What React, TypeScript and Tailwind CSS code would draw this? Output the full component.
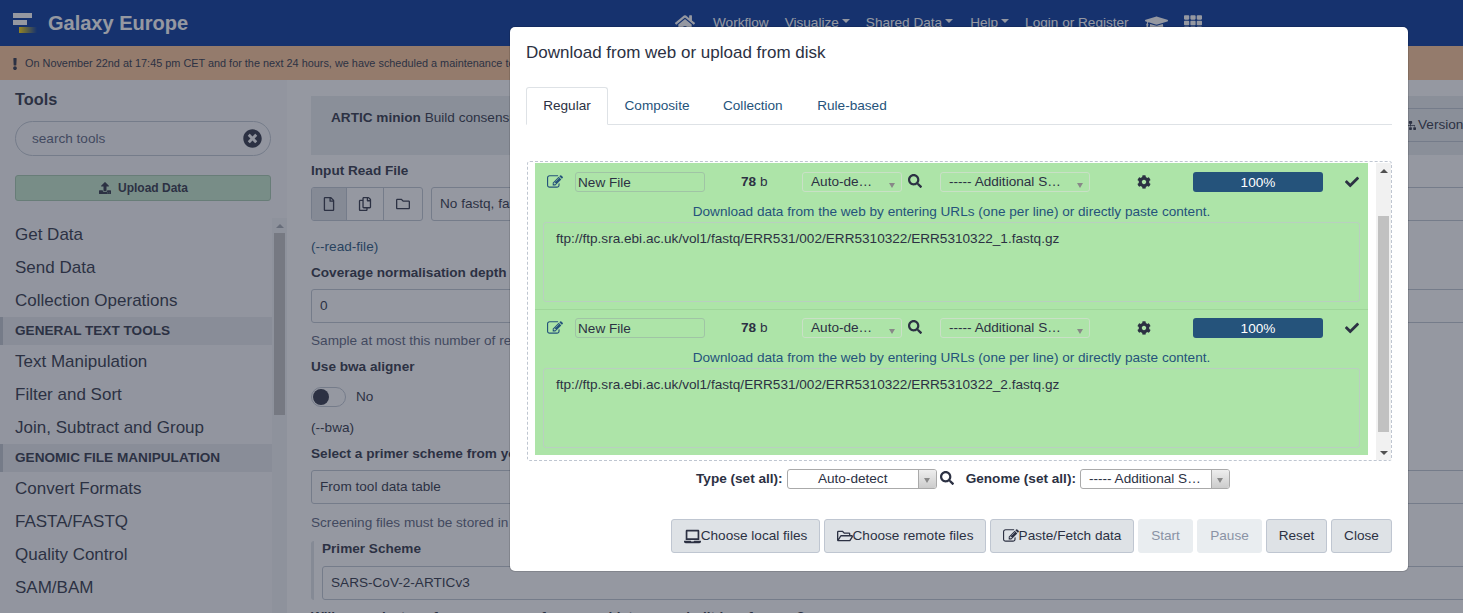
import { FaCheck, FaCog, FaExclamation, FaGraduationCap, FaHome, FaLaptop, FaRegCopy, FaRegFile, FaRegFolder, FaRegFolderOpen, FaSearch, FaSitemap, FaTh, FaTimesCircle, FaUpload } from "react-icons/fa";

const SIDE_TOP = ["Get Data", "Send Data", "Collection Operations"];
const SIDE_TEXT = ["Text Manipulation", "Filter and Sort", "Join, Subtract and Group"];
const SIDE_GENOMIC = ["Convert Formats", "FASTA/FASTQ", "Quality Control", "SAM/BAM"];

// fa-pencil-square-o, the solid FA5 edit icon has a different pencil
function EditIcon({ className }: { className?: string }) {
  return (
    <svg viewBox="0 0 1792 1792" fill="currentColor" className={className}>
      <path d="M888 1184l116-116-152-152-116 116v56h96v96h56zm440-720q-16-16-33 1l-350 350q-17 17-1 33t33-1l350-350q17-17 1-33zm80 594v190q0 119-84.500 203.500t-203.500 84.500h-832q-119 0-203.500-84.500t-84.500-203.500v-832q0-119 84.500-203.500t203.500-84.500h832q63 0 117 25 15 7 18 23 3 17-9 29l-49 49q-14 14-32 8-23-6-45-6h-832q-66 0-113 47t-47 113v832q0 66 47 113t113 47h832q66 0 113-47t47-113v-126q0-13 9-22l64-64q15-15 35-7t20 29zm-96-738l288 288-672 672h-288v-288zm444 132l-92 92-288-288 92-92q28-28 68-28t68 28l152 152q28 28 28 68t-28 68z" />
    </svg>
  );
}

function SideLink({ label }: { label: string }) {
  return <div className="flex h-[33px] items-center pl-[15px] text-[17px] text-[#2c3143]">{label}</div>;
}

function SideSection({ label }: { label: string }) {
  return (
    <div className="flex h-[28px] items-center border-l-[3px] border-[#bfc4cc] bg-[#e6e8ec] pl-[12px] text-[13.6px] font-bold text-[#2c3143] uppercase">
      {label}
    </div>
  );
}

function Sidebar() {
  return (
    <aside className="relative flex h-full w-[287px] shrink-0 flex-col bg-[#f8f9fa]">
      <div className="pt-[9px] pl-[15px] text-[16.3px] leading-[20px] font-bold text-[#2c3143]">Tools</div>
      <div className="mt-[12px] mr-[16px] ml-[15px] flex h-[35px] items-center justify-between rounded-full border border-[#bfc6d1] pt-[1px] pr-[8px] pl-[16px] text-[13.6px] text-[#58617a]">
        search tools
        <FaTimesCircle className="mb-[1px] text-[19px] text-[#2c3143]" />
      </div>
      <div className="mt-[19px] mr-[16px] ml-[15px] flex h-[26px] items-center justify-center gap-[7px] rounded-[3px] border border-[#a4c8ac] bg-[#c5e8cb] pl-[1px] text-[12px] font-bold text-[#2c3143]">
        <FaUpload className="text-[12px]" />
        Upload Data
      </div>
      <div className="relative mt-[17px] min-h-0 flex-1 pr-[15px]">
        {SIDE_TOP.map((s) => <SideLink key={s} label={s} />)}
        <SideSection label="General Text Tools" />
        {SIDE_TEXT.map((s) => <SideLink key={s} label={s} />)}
        <SideSection label="Genomic File Manipulation" />
        {SIDE_GENOMIC.map((s) => <SideLink key={s} label={s} />)}
        <div className="absolute top-0 right-0 bottom-0 w-[15px] bg-[#f1f2f4] pr-[2px] pl-[2px]">
          <div className="mx-auto mt-[6px] h-0 w-0 border-x-[4px] border-b-[4px] border-x-transparent border-b-[#a3a8b0]" />
          <div className="mt-[5px] h-[182px] w-full bg-[#c1c1c1]" />
        </div>
      </div>
    </aside>
  );
}

function FormLabel({ children }: { children: React.ReactNode }) {
  return <div className="text-[13.6px] leading-[16px] font-bold text-[#2c3143]">{children}</div>;
}

function FormInput({ children, className = "" }: { children: React.ReactNode; className?: string }) {
  return (
    <div className={`flex h-[34px] w-[1200px] shrink-0 items-center rounded-[3px] border border-[#bfc6d1] px-[8px] text-[13.6px] text-[#2c3143] ${className}`}>
      {children}
    </div>
  );
}

function CenterForm() {
  return (
    <main className="min-w-0 flex-1 overflow-hidden pt-[16px] pl-[24px] text-[13.6px] text-[#2c3143]">
      <div className="flex h-[59px] w-[1300px] items-start bg-[#e9ecef] pt-[13px] pl-[20px]">
        <span className="leading-[18px]"><b>ARTIC minion</b> Build consensus sequence and call variants from amplicon sequencing data</span>
        <div className="absolute top-[108px] left-[1390px] flex h-[34px] w-[100px] items-center gap-[2px] border-y border-[#bfc6d1] pl-[15px]">
          <FaSitemap className="text-[11px]" />
          Version
        </div>
      </div>
      <div className="mt-[8px]"><FormLabel>Input Read File</FormLabel></div>
      <div className="mt-[8px] flex gap-[8px]">
        <div className="flex h-[34px] w-[112px] shrink-0 overflow-hidden rounded-[3px] border border-[#bfc6d1]">
          <div className="flex w-[35px] items-center justify-center border-r border-[#bfc6d1] bg-[#dee2e6]"><FaRegFile className="text-[14px]" /></div>
          <div className="flex w-[37px] items-center justify-center border-r border-[#bfc6d1]"><FaRegCopy className="text-[14px]" /></div>
          <div className="flex flex-1 items-center justify-center"><FaRegFolder className="text-[14px]" /></div>
        </div>
        <FormInput>No fastq, fastq.gz or fasta datasets available.</FormInput>
      </div>
      <div className="mt-[18px] leading-[16px] text-[#25537b]">(--read-file)</div>
      <div className="mt-[10px]"><FormLabel>Coverage normalisation depth</FormLabel></div>
      <div className="mt-[8px]"><FormInput>0</FormInput></div>
      <div className="mt-[10px] leading-[16px] text-[#58617a]">Sample at most this number of reads per genome region</div>
      <div className="mt-[10px]"><FormLabel>Use bwa aligner</FormLabel></div>
      <div className="mt-[12px] flex h-[20px] items-center gap-[10px]">
        <div className="flex h-[20px] w-[35px] items-center rounded-full border border-[#bfc6d1] pl-[1px]">
          <div className="h-[16px] w-[16px] rounded-full bg-[#2c3143]" />
        </div>
        No
      </div>
      <div className="mt-[13px] leading-[16px]">(--bwa)</div>
      <div className="mt-[10px]"><FormLabel>Select a primer scheme from your history or tool data table</FormLabel></div>
      <div className="mt-[8px]"><FormInput>From tool data table</FormInput></div>
      <div className="mt-[11px] leading-[16px] text-[#58617a]">Screening files must be stored in a built-in tool data table</div>
      <div className="mt-[10px] w-[1300px] rounded-[3px] border-l-[3px] border-[#dee2e6] pl-[8px]">
        <FormLabel>Primer Scheme</FormLabel>
        <div className="mt-[9px]"><FormInput>SARS-CoV-2-ARTICv3</FormInput></div>
      </div>
      <div className="mt-[9px]"><FormLabel>Will you select a reference genome from your history or a built-in reference?</FormLabel></div>
    </main>
  );
}

function TopNav() {
  return (
    <header className="flex h-[46px] w-full shrink-0 items-center bg-[#003399] text-white">
      <svg width="26" height="24" viewBox="0 0 26 24" className="ml-[12px]">
        <defs>
          <linearGradient id="logoGold" x1="0" x2="1" y1="0" y2="0">
            <stop offset="0" stopColor="#ffd700" />
            <stop offset="1" stopColor="#ffd700" stopOpacity="0" />
          </linearGradient>
        </defs>
        <rect x="1" y="2" width="19" height="5" fill="#fff" />
        <rect x="1" y="9" width="14" height="5" fill="#fff" />
        <rect x="7" y="16" width="18" height="6" fill="url(#logoGold)" />
      </svg>
      <div className="ml-[10px] text-[20px] font-bold">Galaxy Europe</div>
      <nav className="absolute top-0 left-[675px] flex h-[46px] items-center text-[13.6px]">
        <FaHome className="text-[20px]" />
        <span className="ml-[18px]">Workflow</span>
        <span className="ml-[16px] flex items-center gap-[3px]">Visualize<Caret /></span>
        <span className="ml-[16px] flex items-center gap-[3px]">Shared Data<Caret /></span>
        <span className="ml-[17px] flex items-center gap-[3px]">Help<Caret /></span>
        <span className="ml-[16px]">Login or Register</span>
        <FaGraduationCap className="ml-[16px] text-[23px]" />
        <FaTh className="ml-[16px] text-[18px]" />
      </nav>
    </header>
  );
}

function Caret() {
  return <span className="mb-[3px] h-0 w-0 border-x-[4px] border-t-[4px] border-x-transparent border-t-white" />;
}

function GreenSelect({ label, width }: { label: string; width: string }) {
  return (
    <div className={`relative flex h-[20px] items-center rounded-[3px] border border-[#c9e0c6] pl-[8px] text-[13.6px] text-[#2c3143] ${width}`}>
      {label}
      <span className="absolute top-[10px] right-[6px] h-0 w-0 border-x-[3px] border-t-[5px] border-x-transparent border-t-[#888]" />
    </div>
  );
}

function UploadRow({ url, first }: { url: string; first?: boolean }) {
  return (
    <div className={`h-[146px] bg-[#ade4a8] px-[8px] ${first ? "pt-[9px]" : "border-t border-[#9fd69a] pt-[8px]"}`}>
      <div className="flex h-[20px] items-center text-[13.6px] text-[#2c3143]">
        <EditIcon className="ml-[4px] h-[16px] w-[16px] text-[#25537b]" />
        <div className="ml-[12px] flex h-[20px] w-[130px] items-center rounded-[3px] border border-[#a0c4a5] pt-[2px] pl-[2px]">New File</div>
        <div className="ml-[36px] w-[27px]"><b>78</b> b</div>
        <div className="ml-[34px]"><GreenSelect label="Auto-de…" width="w-[100px]" /></div>
        <FaSearch className="mb-[2px] ml-[6px] text-[14px]" />
        <div className="ml-[18px]"><GreenSelect label="----- Additional S…" width="w-[150px]" /></div>
        <FaCog className="mb-[1px] ml-[47px] text-[14px]" />
        <div className="ml-[42px] flex h-[20px] w-[130px] items-center justify-center rounded-[3px] bg-[#25537b] pt-[2px] text-white">100%</div>
        <FaCheck className="mb-[1px] ml-[22px] text-[14px]" />
      </div>
      <div className="mt-[12px] text-center text-[13.6px] leading-[16px] text-[#25537b]">
        Download data from the web by entering URLs (one per line) or directly paste content.
      </div>
      <div className="mt-[2px] h-[80px] w-[817px] rounded-[3px] border border-[#b9cfc0] px-[12px] pt-[8px] text-[13.6px] leading-[16px] text-[#2c3143]">
        {url}
      </div>
    </div>
  );
}

function FooterSelect({ label, width, align }: { label: string; width: string; align?: string }) {
  return (
    <div className={`flex h-[20px] items-center overflow-hidden rounded-[3px] border border-[#aaa] text-[13.6px] text-[#2c3143] ${width}`}>
      <div className={`min-w-0 flex-1 px-[8px] ${align ?? ""}`}>{label}</div>
      <div className="flex h-full w-[18px] items-center justify-center border-l border-[#aaa] bg-gradient-to-b from-[#eee] to-[#ccc]">
        <span className="mt-[2px] h-0 w-0 border-x-[3px] border-t-[5px] border-x-transparent border-t-[#888]" />
      </div>
    </div>
  );
}

function ModalButton({ children, disabled, width }: { children: React.ReactNode; disabled?: boolean; width: string }) {
  return (
    <button
      className={[
        "flex h-[34px] items-center justify-center rounded-[3px] border text-[13.6px]",
        width,
        disabled ? "border-[#e9edf0] bg-[#e9edf0] text-[#8a93a5]" : "border-[#bfc6d1] bg-[#dee2e6] text-[#2c3143]",
      ].join(" ")}
    >
      {children}
    </button>
  );
}

function UploadModal() {
  return (
    <div className="absolute top-[27px] left-[510px] flex h-[544px] w-[898px] flex-col rounded-[5px] bg-white px-[16px] text-[#2c3143] shadow-[0_0_0_1px_rgba(0,0,0,0.12)]">
      <div className="mt-[16px] text-[17px] leading-[19px]">Download from web or upload from disk</div>
      <div className="mt-[25px] flex h-[38px] border-b border-[#dee2e6] pt-[1px] text-[13.6px]">
        <div className="-mt-[1px] flex h-[38px] w-[82px] items-center justify-center rounded-t-[3px] border border-[#dee2e6] border-b-white bg-white">Regular</div>
        <div className="flex items-center px-[16.5px] text-[#25537b]">Composite</div>
        <div className="flex items-center px-[17px] text-[#25537b]">Collection</div>
        <div className="flex items-center px-[17.5px] text-[#25537b]">Rule-based</div>
      </div>
      <div className="mt-[36px] ml-[1px] flex h-[300px] w-[865px] rounded-[3px] border border-dashed border-[#bfc6d1] pt-[1px] pl-[7px]">
        <div className="w-[833px]">
          <UploadRow first url="ftp://ftp.sra.ebi.ac.uk/vol1/fastq/ERR531/002/ERR5310322/ERR5310322_1.fastq.gz" />
          <UploadRow url="ftp://ftp.sra.ebi.ac.uk/vol1/fastq/ERR531/002/ERR5310322/ERR5310322_2.fastq.gz" />
        </div>
        <div className="ml-[8px] flex h-[297px] w-[15px] flex-col items-center bg-[#f1f1f1] px-[2px]">
          <span className="mt-[6px] h-0 w-0 border-x-[4px] border-b-[4px] border-x-transparent border-b-[#505050]" />
          <div className="mt-[43px] h-[216px] w-full shrink-0 bg-[#c1c1c1]" />
          <span className="mt-[19px] h-0 w-0 border-x-[4px] border-t-[4px] border-x-transparent border-t-[#505050]" />
        </div>
      </div>
      <div className="mt-[8px] flex h-[20px] items-center justify-center pl-[8px] text-[13.6px]">
        <b>Type (set all):</b>
        <div className="ml-[4px]"><FooterSelect label="Auto-detect" width="w-[150px]" align="text-center" /></div>
        <FaSearch className="mb-[2px] ml-[3px] text-[14px]" />
        <b className="ml-[12px]">Genome (set all):</b>
        <div className="ml-[4px]"><FooterSelect label="----- Additional S…" width="w-[150px]" /></div>
      </div>
      <div className="mt-[30px] flex justify-end gap-[4px]">
        <ModalButton width="w-[149px]"><FaLaptop className="text-[17px]" />Choose local files</ModalButton>
        <ModalButton width="w-[162px]"><FaRegFolderOpen className="text-[16px]" />Choose remote files</ModalButton>
        <ModalButton width="w-[144px]"><EditIcon className="h-[16px] w-[16px]" />Paste/Fetch data</ModalButton>
        <ModalButton disabled width="w-[55px]">Start</ModalButton>
        <ModalButton disabled width="w-[65px]">Pause</ModalButton>
        <ModalButton width="w-[61px]">Reset</ModalButton>
        <ModalButton width="w-[61px]">Close</ModalButton>
      </div>
    </div>
  );
}

export default function App() {
  return (
    <div className="relative flex h-screen w-screen flex-col overflow-hidden bg-white font-['Liberation_Sans',sans-serif]">
      <TopNav />
      <div className="flex h-[34px] w-full shrink-0 items-center bg-[#fdc595] pt-[1px] pl-[9px] text-[10.88px] whitespace-nowrap text-[#2c3143]">
        <FaExclamation className="mr-[4px] text-[12px]" />
        On November 22nd at 17:45 pm CET and for the next 24 hours, we have scheduled a maintenance to our storage system. Galaxy will be read-only during this period.
      </div>
      <div className="flex min-h-0 flex-1">
        <Sidebar />
        <CenterForm />
      </div>
      {/* backdrop + dialog sit over the page */}
      <div className="absolute inset-0 bg-[#2c3143]/50" />
      <UploadModal />
    </div>
  );
}
